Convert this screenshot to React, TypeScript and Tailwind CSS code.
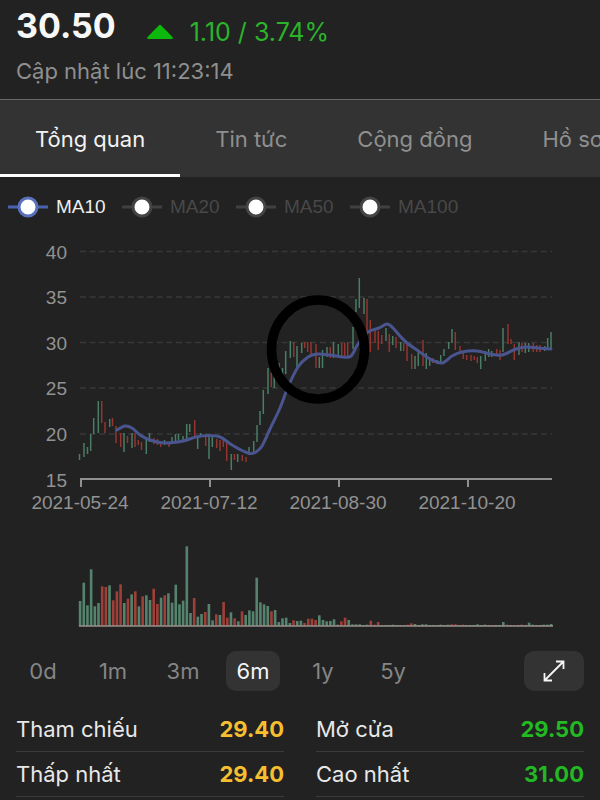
import clsx from "clsx";

type Candle = [x: number, high: number, low: number, side: "u" | "d"];

const tabs = ["Tổng quan", "Tin tức", "Cộng đồng", "Hồ sơ"];
const averages = ["MA10", "MA20", "MA50", "MA100"];
const ranges = ["0d", "1m", "3m", "6m", "1y", "5y"];

const stats = [
  { label: "Tham chiếu", value: "29.40", color: "text-[#f5bf2f]" },
  { label: "Mở cửa", value: "29.50", color: "text-[#22b922]" },
  { label: "Thấp nhất", value: "29.40", color: "text-[#f5bf2f]" },
  { label: "Cao nhất", value: "31.00", color: "text-[#22b922]" },
];

const UP = "#4a7d66";
const DOWN = "#943530";

const priceTicks = [
  { label: "40", y: 251.5 },
  { label: "35", y: 297 },
  { label: "30", y: 342.5 },
  { label: "25", y: 388 },
  { label: "20", y: 434 },
  { label: "15", y: 479.5 },
];

const dateTicks = [
  { label: "2021-05-24", x: 80 },
  { label: "2021-07-12", x: 209 },
  { label: "2021-08-30", x: 338 },
  { label: "2021-10-20", x: 467 },
];

const candles: Candle[] = [
  [79.5, 454, 460, "u"], [84, 443, 457, "u"], [87.5, 447, 454, "u"], [90.7, 434, 451, "u"],
  [93.7, 418, 434, "u"], [98.3, 401, 433, "u"], [101.7, 401, 423, "d"], [105, 422, 433, "d"],
  [109.7, 419, 427, "u"], [112.5, 418, 426, "d"], [116, 426, 443, "d"], [120.7, 433, 447, "d"],
  [124, 433, 452, "u"], [127.5, 436, 443, "d"], [132, 433, 448, "u"], [135, 433, 447, "d"],
  [138.3, 440, 445, "d"], [141.5, 442, 450, "d"], [146.3, 438, 454, "u"], [149.5, 433, 442, "u"],
  [154, 438, 444, "d"], [157.5, 439, 445, "d"], [160.7, 442, 447, "d"], [164.5, 440, 445, "u"],
  [169, 442, 447, "d"], [172, 437, 443, "u"], [175.5, 434, 443, "u"], [178.5, 434, 440, "u"],
  [183, 436, 442, "u"], [186.7, 424, 440, "u"], [189.7, 424, 432, "u"], [194.7, 420, 437, "d"],
  [197.7, 437, 449, "u"], [200.7, 433, 437, "u"], [205.7, 435, 446, "d"], [209, 437, 459, "u"],
  [212.3, 437, 447, "u"], [216.7, 439, 448, "d"], [220, 440, 451, "d"], [223.3, 438, 447, "d"],
  [226.7, 442, 461, "d"], [231.3, 454, 470, "u"], [234.5, 454, 460, "d"], [237.7, 454, 462, "u"],
  [242.3, 455, 461, "d"], [246, 457, 462, "d"], [249, 447, 455, "u"], [253.7, 441, 453, "u"],
  [257, 425, 442, "u"], [260, 411, 425, "u"], [263.3, 390, 414, "u"], [268, 368, 394, "u"],
  [271.3, 373, 387, "d"], [274.3, 377, 388, "u"], [279, 363, 377, "u"], [282.5, 368, 375, "u"],
  [285.7, 351, 374, "u"], [290.3, 341, 358, "u"], [293.7, 342, 357, "d"], [297, 346, 368, "u"],
  [301.7, 343, 353, "u"], [304.7, 342, 348, "d"], [307.7, 342, 352, "d"], [311, 342, 355, "d"],
  [316, 344, 368, "d"], [319.3, 357, 368, "u"], [322.5, 350, 368, "u"], [327, 347, 357, "u"],
  [330.3, 347, 358, "d"], [333.5, 342, 358, "u"], [338.3, 344, 356, "u"], [341.7, 343, 356, "d"],
  [344.7, 343, 357, "d"], [347.7, 342, 356, "d"], [353, 327, 349, "u"], [356, 299, 312, "u"],
  [359.3, 278, 308, "u"], [364, 298, 314, "u"], [367, 299, 335, "d"], [370.3, 320, 352, "d"],
  [375, 330, 343, "d"], [378.3, 331, 350, "d"], [381.7, 335, 344, "d"], [386, 328, 341, "u"],
  [389.3, 334, 352, "d"], [392.7, 336, 345, "u"], [396, 337, 348, "d"], [400.7, 342, 351, "u"],
  [403.7, 343, 351, "d"], [407, 343, 361, "d"], [411.7, 354, 369, "d"], [415, 356, 369, "u"],
  [418.3, 351, 366, "u"], [423, 340, 366, "d"], [426.3, 353, 369, "u"], [429.7, 360, 366, "u"],
  [432.7, 358, 363, "d"], [437.3, 360, 364, "u"], [440.7, 355, 364, "u"], [444, 349, 356, "u"],
  [448.7, 342, 349, "u"], [452, 329, 343, "u"], [455.3, 332, 350, "d"], [460, 346, 352, "d"],
  [463.3, 351, 359, "d"], [466.7, 355, 360, "d"], [471, 355, 361, "d"], [474.3, 356, 360, "d"],
  [477.3, 357, 363, "d"], [480.7, 356, 369, "u"], [485.3, 351, 361, "u"], [488.7, 349, 357, "u"],
  [491.7, 351, 357, "u"], [496.7, 349, 355, "d"], [500, 350, 360, "d"], [503, 328, 352, "u"],
  [508, 324, 344, "d"], [511, 339, 344, "d"], [514.3, 344, 360, "d"], [519, 342, 355, "u"],
  [522, 343, 352, "d"], [525.3, 343, 353, "u"], [528.7, 343, 352, "u"], [533.3, 343, 352, "d"],
  [536.7, 345, 352, "d"], [540, 345, 352, "d"], [544.7, 346, 351, "u"], [547.7, 338, 349, "u"],
  [551, 332, 349, "u"],
];

const ma10: [number, number][] = [
  [117, 430], [125, 426], [132, 428], [140, 435], [150, 440], [165, 443], [183, 441], [196, 437],
  [208, 435.5], [220, 437], [232, 445], [243, 451], [250, 453.5], [256, 452], [262, 446], [270, 429],
  [280, 408], [288, 387], [298, 367], [308, 357], [317, 354], [330, 355], [343, 357], [351, 356],
  [358, 344], [368, 332], [379, 328], [387, 324], [393, 328], [400, 336], [407, 343], [417, 350],
  [430, 359], [442, 363], [452, 356], [462, 352], [477, 351], [490, 354], [502, 355], [516, 349],
  [527, 347], [538, 348], [551, 349],
];

// one entry per session, negative when the session closed lower
const volumes = [
  75, 130, 62, 170, 59, 69, -119, -117, 122, -77, -104, -125, 69, -82, 95, -104, 59, -89, 92, 78,
  -112, -66, 85, -92, 98, 70, 124, 65, 76, 239, 39, -84, 28, 36, -42, 66, 17, -35, 33, -72, -25, 41,
  -23, 14, -44, 33, 47, 44, 145, 71, 65, 60, -44, 48, 12, 23, 25, 9, -17, 15, 16, -9, -22, -22, -18,
  32, 18, 14, 15, 20, 4, -14, -25, 18, 5, 5, 5, 3, 4, -16, -4, -12, 3, 3, 3, 4, 3, 3, -3, -4, -8, 6,
  3, 5, 5, 3, 3, 3, 4, 3, 4, -5, -5, 3, -4, 3, 3, 3, 5, 3, 4, 3, -3, 3, 3, 12, -4, 3, -3, 3, -4, 3,
  10, 4, 3, 3, 4, 4, 6,
];

function smoothPath(points: [number, number][]) {
  let d = `M${points[0][0]} ${points[0][1]}`;
  for (let i = 0; i < points.length - 1; i++) {
    const p0 = points[i - 1] ?? points[i];
    const p1 = points[i];
    const p2 = points[i + 1];
    const p3 = points[i + 2] ?? p2;
    d += `C${p1[0] + (p2[0] - p0[0]) / 6} ${p1[1] + (p2[1] - p0[1]) / 6} ${p2[0] - (p3[0] - p1[0]) / 6} ${p2[1] - (p3[1] - p1[1]) / 6} ${p2[0]} ${p2[1]}`;
  }
  return d;
}

function Legend() {
  return (
    <div className="flex gap-4 px-2 pt-[17px] pb-4 font-['Liberation_Sans',sans-serif] text-[19px] leading-[26px]">
      {averages.map((name, i) => (
        <button
          key={name}
          type="button"
          aria-pressed={i === 0}
          className={clsx(
            "flex min-w-[98px] items-center gap-2",
            i === 0 ? "text-[#eeeeee]" : "text-[#484848]"
          )}
        >
          <svg width="40" height="24" viewBox="0 0 40 24" aria-hidden="true">
            <path d="M0 12H40" stroke={i === 0 ? "#4a62ae" : "#404040"} strokeWidth="3" />
            <circle cx="20" cy="12" r="9" fill="#fff" stroke={i === 0 ? "#5a70bb" : "#444"} strokeWidth="3" />
          </svg>
          {name}
        </button>
      ))}
    </div>
  );
}

function Chart() {
  return (
    <svg viewBox="0 236 600 403" className="block w-full font-['Liberation_Sans',sans-serif] text-[19px]">
      {priceTicks.map((t) => (
        <g key={t.label}>
          {t.label !== "15" && (
            <path d={`M80 ${t.y}H552`} stroke="#383838" strokeWidth="1.5" strokeDasharray="6 3.6" />
          )}
          <text x="67" y={t.y + 7} textAnchor="end" fill="#929292">
            {t.label}
          </text>
        </g>
      ))}

      {candles.map(([x, high, low, side]) => (
        <path key={x} d={`M${x} ${high}V${low}`} stroke={side === "u" ? UP : DOWN} strokeWidth="1.5" />
      ))}
      <path d={smoothPath(ma10)} fill="none" stroke="#4a5590" strokeWidth="3" strokeLinecap="round" />

      <path d="M80 479H552" stroke="#909090" strokeWidth="2" />
      {dateTicks.map((t) => (
        <g key={t.label}>
          <path d={`M${t.x + 1} 479V487`} stroke="#909090" strokeWidth="2" />
          <text x={t.x} y="509" textAnchor="middle" fill="#929292">
            {t.label}
          </text>
        </g>
      ))}

      {/* marked zone */}
      <ellipse cx="318" cy="349.5" rx="46.5" ry="49.5" fill="none" stroke="#000" strokeWidth="9.5" />

      {volumes.map((v, i) => (
        <rect
          key={i}
          x={78.8 + i * 3.68}
          y={626 - Math.abs(v) / 3}
          width="2.6"
          height={Math.abs(v) / 3}
          fill={v > 0 ? "#55836d" : "#9e3f38"}
        />
      ))}
      <path d="M79 626H553" stroke="#99918c" strokeWidth="1.5" />
    </svg>
  );
}

export default function App() {
  return (
    <div className="min-h-screen overflow-hidden bg-[#222222] font-[Inter,sans-serif] text-[#e8e8e8]">
      <header className="px-4 pt-1 pb-3">
        <div className="flex items-center">
          <h1 className="text-[34px] leading-[44px] font-bold text-[#f7f7f7]">30.50</h1>
          <svg width="28" height="16" viewBox="0 0 28 16" className="mt-3 ml-[30px]" aria-hidden="true">
            <path d="M13 1.2Q14 .4 15 1.2L26.5 13Q27.5 15 25.5 15H2.5Q.5 15 1.5 13Z" fill="#0bb80b" />
          </svg>
          <span className="mt-3 ml-4 text-[25px] leading-[32px] text-[#2bb32b]">1.10 / 3.74%</span>
        </div>
        <p className="pt-2 text-[22px] leading-[31px] text-[#8f8f8f]">Cập nhật lúc 11:23:14</p>
      </header>

      <nav className="flex overflow-hidden border-t border-[#686868] bg-[#333333] text-[22px] leading-[30px]">
        {tabs.map((tab, i) => (
          <button
            key={tab}
            type="button"
            className={clsx(
              "shrink-0 border-b-[3px] px-[35px] pt-6 pb-5 whitespace-nowrap",
              i === 0 ? "border-white text-[#f2f2f2]" : "border-transparent text-[#8f8f8f]"
            )}
          >
            {tab}
          </button>
        ))}
      </nav>

      <main>
        <Legend />
        <Chart />

        <div className="flex items-center justify-between px-4 pt-3 text-[22px] leading-[40px]">
          <div className="flex gap-4">
            {ranges.map((r) => (
              <button
                key={r}
                type="button"
                className={clsx(
                  "w-[54px] rounded-[10px] text-center",
                  r === "6m" ? "bg-[#333333] text-[#f5f5f5]" : "text-[#858585]"
                )}
              >
                {r}
              </button>
            ))}
          </div>
          <button
            type="button"
            aria-label="Toàn màn hình"
            className="flex h-10 w-[60px] items-center justify-center rounded-[10px] bg-[#333333]"
          >
            <svg width="22" height="22" viewBox="0 0 22 22" fill="none" stroke="#f5f5f5" strokeWidth="1.8" aria-hidden="true">
              <path d="M1.5 20.5L20.5 1.5M13 1.5H20.5V9M1.5 13V20.5H9" />
            </svg>
          </button>
        </div>

        <dl className="grid grid-cols-2 gap-x-8 px-4 pt-4 text-[22px] leading-[44px]">
          {stats.map((s) => (
            <div key={s.label} className="flex justify-between border-b border-[#3a3a3a]">
              <dt>{s.label}</dt>
              <dd className={clsx("font-bold", s.color)}>{s.value}</dd>
            </div>
          ))}
        </dl>
      </main>
    </div>
  );
}
